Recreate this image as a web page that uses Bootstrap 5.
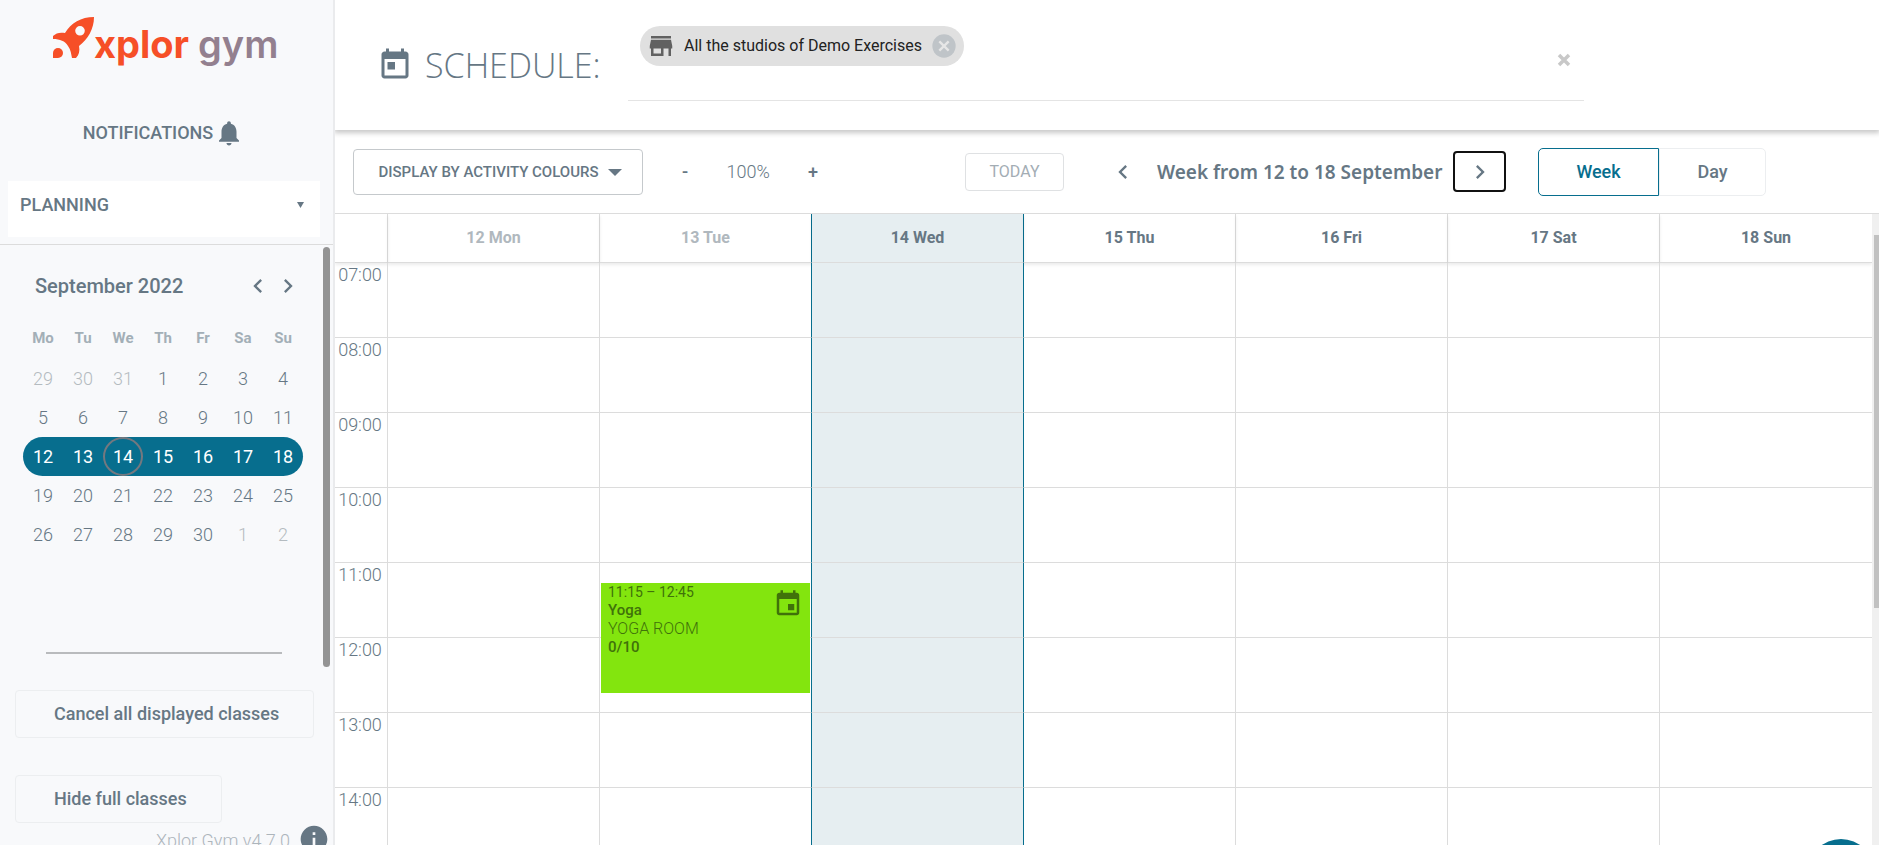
<!DOCTYPE html>
<html lang="en">
<head>
<meta charset="utf-8">
<meta name="viewport" content="width=device-width, initial-scale=1">
<title>Xplor Gym – Schedule</title>
<link href="https://cdn.jsdelivr.net/npm/bootstrap@5.3.0/dist/css/bootstrap.min.css" rel="stylesheet">
<style>
:root { --slate: #667784; --teal: #076e8e; --line: #dcdcdc; }
body { font-family: Roboto, "Liberation Sans", sans-serif; font-size: 18px; line-height: 24px; color: var(--slate); background: #fff; }
svg { fill: currentColor; display: block; flex: none; }
a, a:hover { color: inherit; text-decoration: none; }
.btn { --bs-btn-color: var(--slate); font-size: 18px; line-height: 24px; font-weight: 500; }
.icon-btn { border: 0; padding: 0; background: none; color: inherit; }

/* sidebar */
.side { width: 335px; background: #f8f9fb; border-right: 2px solid #eaebed; }
.side > * { flex-shrink: 0; }
.brand { padding: 16px 0 0 52px; height: 118px; }
.brand-name { font: 700 38px/48px Inter, sans-serif; color: #f64f27; margin-top: 4px; white-space: nowrap; }
.brand-name span { color: #93808f; font-weight: 600; }
.notif { height: 30px; padding-right: 6px; gap: 1px; font-weight: 500; }
.section-select { margin: 33px 13px 7px 8px; padding: 12px 16px 20px 12px; height: 56px; background: #fff; border: 0; color: inherit; font-weight: 500; }
.side-scroll { flex: 1 1 0; border-top: 1px solid var(--line); min-height: 0; overflow: hidden; position: relative; }
.side-thumb { position: absolute; right: 3px; top: 2px; width: 7px; height: 420px; border-radius: 4px; background: #949494; }
.cal-head { padding: 27px 31px 0 35px; gap: 2px; font-size: 20px; line-height: 28px; font-weight: 500; }
.cal { margin: 17px 30px 0 23px; width: 280px; table-layout: fixed; border-collapse: separate; border-spacing: 0; text-align: center; }
.cal th { height: 42px; font-size: 15px; font-weight: 700; color: #a3afb7; padding: 0; }
.cal td { height: 39px; font-weight: 300; padding: 0; }
.cal .other { color: #b4bbc0; }
.cal .picked td { background: var(--teal); color: #fff; font-weight: 400; }
.cal .picked td:first-child { border-radius: 20px 0 0 20px; }
.cal .picked td:last-child { border-radius: 0 20px 20px 0; }
.now { display: block; line-height: 35px; border: 2px solid #74787f; border-radius: 50%; }
.rule { margin: 98px 51px 36px 46px; border-top: 2px solid #b9bbbd; opacity: 1; }
.side-action { margin: 0 0 37px 15px; height: 48px; padding: 0 34px 0 38px; border: 1px solid #eceef0; border-radius: 4px; }
.version { padding-right: 3px; font-weight: 300; color: #adb5bb; height: 22px; }
.version span { line-height: 36px; }

/* header */
.top { height: 130px; box-shadow: 0 2px 5px 1px rgba(0,0,0,.22); padding-left: 42px; z-index: 2; }
.top h1 { font: 300 34px/44px "Open Sans", sans-serif; width: 207px; margin: 0; padding-left: 12px; }
.studios { flex: 0 1 956px; height: 101px; border-bottom: 1px solid #e4e4e4; padding: 26px 12px 0; }
.chip { height: 40px; border-radius: 20px; background: #e0e0e0; color: #222; font-size: 16px; padding: 0 6px; gap: 8px; }
.chip > svg { color: #616161; }
.chip .icon-btn { color: #bfc4c8; }

/* toolbar */
.tools { height: 84px; border-bottom: 1px solid var(--line); padding-left: 18px; }
.tools .mode { width: 290px; height: 46px; border: 1px solid #c5c9cc; border-radius: 4px; font-size: 15px; padding: 0 20px 0 24px; white-space: nowrap; }
.tools .mode::after { vertical-align: 1px; margin-left: 9px; border-width: 7px 7px 0; }
.zoomer { margin-left: 31px; width: 152px; }
.zoomer b { font-weight: 500; }
.tools .today { margin-left: 139px; width: 99px; height: 38px; padding: 0; font-size: 16px; font-weight: 400; color: #a3adb4; border: 1px solid #dfe1e3; border-radius: 4px; }
.prev { margin-left: 45px; }
.range { font: 600 19px/24px "Noto Sans", sans-serif; margin-left: 20px; width: 296px; white-space: nowrap; }
.next { width: 53px; height: 41px; border: 2px solid #111; border-radius: 4px; }
.views { margin-left: 32px; }
.views .btn { height: 48px; padding: 0; width: 107px; border: 1px solid #eceef0; border-radius: 0 5px 5px 0; }
.views .btn.on { width: 121px; border-color: var(--teal); color: var(--teal); border-radius: 5px 0 0 5px; }

/* week grid */
.grid-wrap { min-height: 0; overflow: hidden; }
.week { table-layout: fixed; width: 100%; border-collapse: separate; border-spacing: 0; }
.week col:first-child { width: 53px; }
.week th, .week td { border: 0 solid var(--line); border-width: 0 1px 1px 0; padding: 0; }
.week tr > :last-child { border-right: 0; }
.week thead th { height: 49px; text-align: center; font-size: 16px; font-weight: 700; box-shadow: 0 2px 3px rgba(0,0,0,.08); }
.week thead .past { color: #b0b8be; }
.week tbody th { height: 75px; vertical-align: top; text-align: center; font-weight: 300; padding-right: 2px; }
.week tr > :nth-child(3) { border-right-color: var(--teal); }
.week tr > :nth-child(4) { background: #e6eef1; border-right-color: var(--teal); }
.slot { position: relative; }
.class-card { position: absolute; top: 20px; left: 1px; right: 1px; height: 110px; background: #83e50e; color: #40720a; padding: 0 7px; font-size: 14px; line-height: 18px; }
.class-card strong { font-weight: 500; font-size: 15px; display: block; }
.class-card .room { font-weight: 300; font-size: 16px; line-height: 19px; }
.class-card svg { position: absolute; top: 6px; right: 7px; }
.bar { width: 7px; background: #f0f0f0; padding: 21px 0 0 2px; }
.bar div { height: 373px; background: #c1c1c1; }
.help { position: fixed; right: 5px; bottom: -60px; width: 66px; height: 66px; border: 0; border-radius: 50%; background: var(--teal); }
</style>
</head>
<body>
<div class="d-flex vh-100 overflow-hidden">
  <aside class="side d-flex flex-column flex-shrink-0">
    <div class="brand d-flex">
      <svg width="42" height="43" viewBox="0 0 42 43" style="color:#f64f27" aria-hidden="true"><path fill-rule="evenodd" d="M42 1C29 1 19 7 13 17 8 16 4 17 1 20V23c7 0 12 2 15 7 3 4 3 8 4 12h4c3-3 4-7 3-12C36 23 42 13 42 1zM28 10a4.800 4.800 0 1 1 0 9.600 4.800 4.800 0 0 1 0-9.600z"/><path d="M1 42V37a5 5 0 1 1 5 5z"/></svg>
      <div class="brand-name">xplor <span>gym</span></div>
    </div>
    <a href="#" class="notif d-flex justify-content-center align-items-center">NOTIFICATIONS
      <svg width="30" height="30" viewBox="0 0 24 24" aria-hidden="true"><path d="M12 22c1.100 0 2-.9 2-2h-4c0 1.100.89 2 2 2zm6-6v-5c0-3.070-1.640-5.640-4.500-6.320V4c0-.83-.67-1.500-1.500-1.500s-1.500.67-1.500 1.500v.68C7.630 5.360 6 7.920 6 11v5l-2 2v1h16v-1l-2-2z"/></svg>
    </a>
    <button class="section-select d-flex justify-content-between align-items-center">PLANNING
      <svg width="7" height="6" viewBox="0 0 7 6" aria-hidden="true"><path d="M0 0h7L3.500 6z"/></svg>
    </button>
    <div class="side-scroll">
      <div class="side-thumb"></div>
      <div class="cal-head d-flex align-items-center">
        <span class="me-auto">September 2022</span>
        <button class="icon-btn" aria-label="Previous month"><svg width="28" height="28" viewBox="0 0 24 24"><path d="M15.410 7.410L14 6l-6 6 6 6 1.410-1.410L10.830 12z"/></svg></button>
        <button class="icon-btn" aria-label="Next month"><svg width="28" height="28" viewBox="0 0 24 24"><path d="M10 6L8.590 7.410 13.170 12l-4.580 4.590L10 18l6-6z"/></svg></button>
      </div>
      <table class="cal">
        <thead><tr><th>Mo</th><th>Tu</th><th>We</th><th>Th</th><th>Fr</th><th>Sa</th><th>Su</th></tr></thead>
        <tbody>
          <tr><td class="other">29</td><td class="other">30</td><td class="other">31</td><td>1</td><td>2</td><td>3</td><td>4</td></tr>
          <tr><td>5</td><td>6</td><td>7</td><td>8</td><td>9</td><td>10</td><td>11</td></tr>
          <tr class="picked"><td>12</td><td>13</td><td><span class="now">14</span></td><td>15</td><td>16</td><td>17</td><td>18</td></tr>
          <tr><td>19</td><td>20</td><td>21</td><td>22</td><td>23</td><td>24</td><td>25</td></tr>
          <tr><td>26</td><td>27</td><td>28</td><td>29</td><td>30</td><td class="other">1</td><td class="other">2</td></tr>
        </tbody>
      </table>
      <hr class="rule">
      <button class="btn side-action d-block">Cancel all displayed classes</button>
      <button class="btn side-action d-block">Hide full classes</button>
    </div>
    <div class="version d-flex justify-content-end gap-2">
      <span>Xplor Gym v4.7.0</span>
      <svg width="32" height="32" viewBox="0 0 24 24" style="color:#667784" aria-hidden="true"><path d="M12 2C6.480 2 2 6.480 2 12s4.480 10 10 10 10-4.480 10-10S17.520 2 12 2zm1 15h-2v-6h2v6zm0-8h-2V7h2v2z"/></svg>
    </div>
  </aside>

  <main class="flex-grow-1 d-flex flex-column overflow-hidden">
    <header class="top d-flex flex-shrink-0">
      <div class="d-flex align-items-center">
        <svg width="36" height="36" viewBox="0 0 24 24" aria-hidden="true"><path d="M19 3h-1V1h-2v2H8V1H6v2H5c-1.110 0-1.990.9-1.990 2L3 19c0 1.100.89 2 2 2h14c1.100 0 2-.9 2-2V5c0-1.100-.9-2-2-2zm0 16H5V8h14v11zM7 10h5v5H7z"/></svg>
        <h1>SCHEDULE:</h1>
      </div>
      <div class="studios d-flex align-items-start justify-content-between ms-2">
        <div class="chip d-flex align-items-center">
          <svg width="30" height="30" viewBox="0 0 24 24" aria-hidden="true"><path d="M20 4H4v2h16V4zm1 10v-2l-1-5H4l-1 5v2h1v6h10v-6h4v6h2v-6h1zm-9 4H6v-4h6v4z"/></svg>
          <span>All the studios of Demo Exercises</span>
          <button class="icon-btn" aria-label="Remove"><svg width="28" height="28" viewBox="0 0 24 24"><circle cx="12" cy="12" r="10"/><path fill="none" stroke="#e6e6e6" stroke-width="2" d="M8 8l8 8M16 8l-8 8"/></svg></button>
        </div>
        <button class="icon-btn mt-4" aria-label="Clear"><svg width="16" height="20" viewBox="0 0 16 20"><path fill="none" stroke="#c8c8c8" stroke-width="3.500" d="M3 5l10 10M13 5L3 15"/></svg></button>
      </div>
    </header>

    <div class="tools d-flex align-items-center flex-shrink-0">
      <button class="btn mode dropdown-toggle">DISPLAY BY ACTIVITY COLOURS</button>
      <div class="zoomer d-flex align-items-center justify-content-between px-2">
        <button class="icon-btn" aria-label="Zoom out"><b>-</b></button><span class="fw-light">100%</span><button class="icon-btn" aria-label="Zoom in"><b>+</b></button>
      </div>
      <button class="btn today">TODAY</button>
      <button class="icon-btn prev" aria-label="Previous week"><svg width="28" height="28" viewBox="0 0 24 24"><path d="M15.410 7.410L14 6l-6 6 6 6 1.410-1.410L10.830 12z"/></svg></button>
      <span class="range">Week from 12 to 18 September</span>
      <button class="icon-btn next d-flex align-items-center justify-content-center" aria-label="Next week"><svg width="28" height="28" viewBox="0 0 24 24"><path d="M10 6L8.590 7.410 13.170 12l-4.580 4.590L10 18l6-6z"/></svg></button>
      <div class="views d-flex"><button class="btn on">Week</button><button class="btn">Day</button></div>
    </div>

    <div class="grid-wrap d-flex flex-grow-1">
      <div class="flex-grow-1">
        <table class="week">
          <colgroup><col><col span="7"></colgroup>
          <thead><tr><th></th><th class="past">12 Mon</th><th class="past">13 Tue</th><th>14 Wed</th><th>15 Thu</th><th>16 Fri</th><th>17 Sat</th><th>18 Sun</th></tr></thead>
          <tbody>
            <tr><th>07:00</th><td></td><td></td><td></td><td></td><td></td><td></td><td></td></tr>
            <tr><th>08:00</th><td></td><td></td><td></td><td></td><td></td><td></td><td></td></tr>
            <tr><th>09:00</th><td></td><td></td><td></td><td></td><td></td><td></td><td></td></tr>
            <tr><th>10:00</th><td></td><td></td><td></td><td></td><td></td><td></td><td></td></tr>
            <tr><th>11:00</th><td></td><td class="slot">
              <div class="class-card">11:15 – 12:45<strong>Yoga</strong><div class="room">YOGA ROOM</div><strong>0/10</strong>
                <svg width="30" height="30" viewBox="0 0 24 24" aria-hidden="true"><path d="M17 12h-5v5h5v-5zM16 1v2H8V1H6v2H5c-1.110 0-1.990.9-1.990 2L3 19c0 1.100.89 2 2 2h14c1.100 0 2-.9 2-2V5c0-1.100-.9-2-2-2h-1V1h-2zm3 18H5V8h14v11z"/></svg>
              </div></td><td></td><td></td><td></td><td></td><td></td></tr>
            <tr><th>12:00</th><td></td><td></td><td></td><td></td><td></td><td></td><td></td></tr>
            <tr><th>13:00</th><td></td><td></td><td></td><td></td><td></td><td></td><td></td></tr>
            <tr><th>14:00</th><td></td><td></td><td></td><td></td><td></td><td></td><td></td></tr>
          </tbody>
        </table>
      </div>
      <div class="bar flex-shrink-0"><div></div></div>
    </div>
  </main>
</div>
<button class="help" aria-label="Help"></button>
<script src="https://cdn.jsdelivr.net/npm/bootstrap@5.3.0/dist/js/bootstrap.bundle.min.js"></script>
</body>
</html>
